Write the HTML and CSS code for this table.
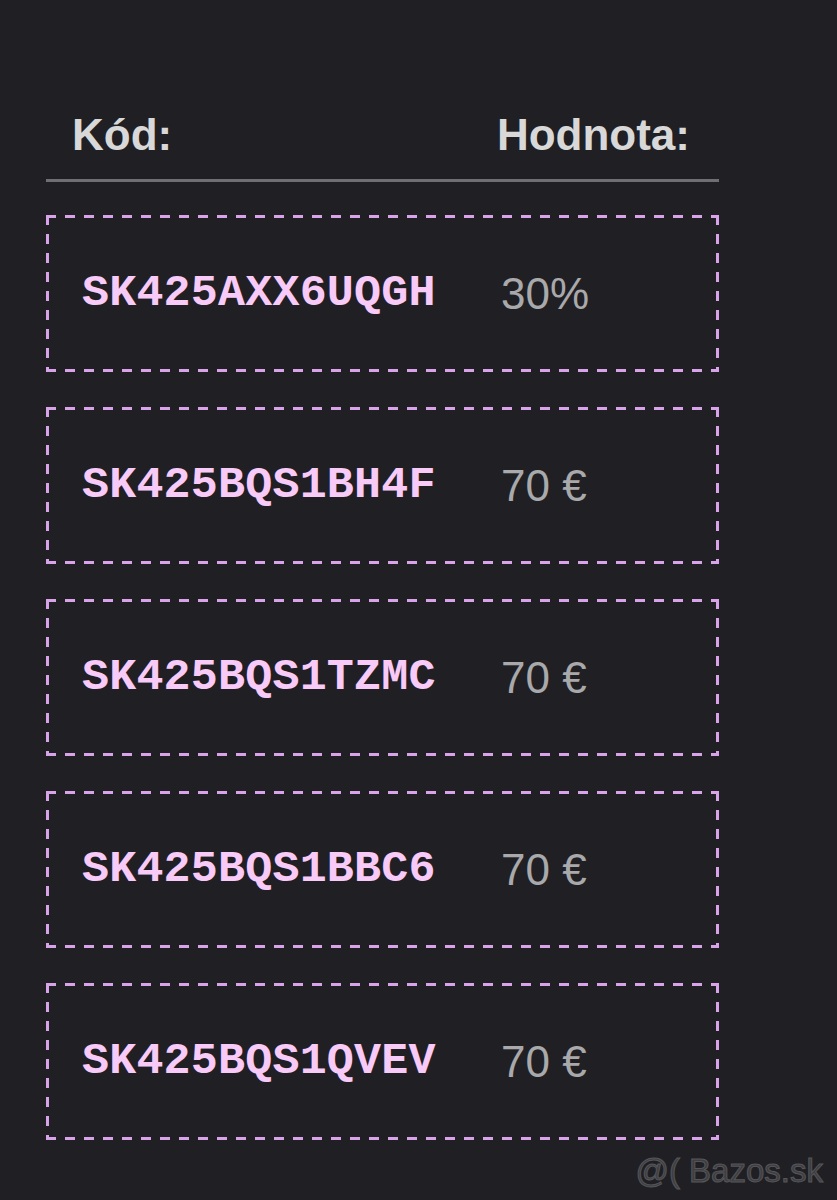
FILE: index.html
```html
<!DOCTYPE html>
<html lang="sk">
<head>
<meta charset="utf-8">
<title>Kódy</title>
<link rel="stylesheet" href="styles.css">
</head>
<body>
<main class="page">
  <div class="table">
    <div class="head">
      <span class="head-code">Kód:</span>
      <span class="head-value">Hodnota:</span>
    </div>
    <ul class="list">
      <li class="row"><span class="code">SK425AXX6UQGH</span><span class="value">30%</span></li>
      <li class="row"><span class="code">SK425BQS1BH4F</span><span class="value">70 €</span></li>
      <li class="row"><span class="code">SK425BQS1TZMC</span><span class="value">70 €</span></li>
      <li class="row"><span class="code">SK425BQS1BBC6</span><span class="value">70 €</span></li>
      <li class="row"><span class="code">SK425BQS1QVEV</span><span class="value">70 €</span></li>
    </ul>
  </div>
  <div class="watermark">@( Bazos.sk</div>
</main>
</body>
</html>
```
FILE: styles.css
```css
html, body {
  margin: 0;
  padding: 0;
  background: #202024;
}
.page {
  position: relative;
  width: 837px;
  height: 1200px;
  overflow: hidden;
  padding: 113px 0 0 46px;
  box-sizing: border-box;
}
.table {
  width: 673px;
}
.head {
  display: flex;
  justify-content: space-between;
  padding: 0 29px 22px 26px;
  border-bottom: 3px solid #6f6f73;
  font-family: "Liberation Sans", Arial, sans-serif;
  font-weight: bold;
  font-size: 44px;
  line-height: 44px;
  color: #d8d8d8;
}
.list {
  list-style: none;
  margin: 33px 0 0;
  padding: 0;
  display: flex;
  flex-direction: column;
  gap: 35px;
}
.row {
  height: 157px;
  box-sizing: border-box;
  display: grid;
  grid-template-columns: 419px auto;
  align-items: center;
  padding-left: 36px;
  --dash: #d9a3ea;
  background:
    repeating-linear-gradient(90deg, var(--dash) 0 10px, transparent 10px 19px) left top / 100% 3px no-repeat,
    repeating-linear-gradient(90deg, var(--dash) 0 10px, transparent 10px 19px) left bottom / 100% 3px no-repeat,
    repeating-linear-gradient(180deg, var(--dash) 0 10px, transparent 10px 19px) left top / 3px 100% no-repeat,
    repeating-linear-gradient(180deg, var(--dash) 0 10px, transparent 10px 19px) right top / 3px 100% no-repeat;
}
.code {
  font-family: "Liberation Mono", "Courier New", monospace;
  font-weight: bold;
  font-size: 45px;
  color: #f7caf7;
  letter-spacing: 0.2px;
}
.value {
  font-family: "Liberation Sans", Arial, sans-serif;
  font-size: 44px;
  color: #a9a9ab;
}
.watermark {
  position: absolute;
  right: 14px;
  bottom: 13px;
  font-family: "Liberation Sans", Arial, sans-serif;
  font-size: 33px;
  line-height: 33px;
  color: #3e3e42;
  -webkit-text-stroke: 1px #56565a;
}
```
